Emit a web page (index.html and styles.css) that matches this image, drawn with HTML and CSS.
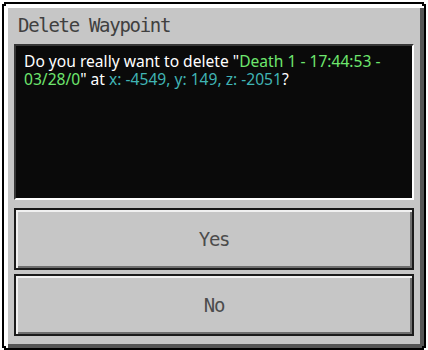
FILE: index.html
```html
<!DOCTYPE html>
<html>
<head>
<meta charset="utf-8">
<link rel="stylesheet" href="styles.css">
</head>
<body>
<div class="frame">
  <div class="title">Delete Waypoint</div>
  <div class="msgbox">
    <p class="msg">Do you really want to delete "<span class="green">Death 1 - 17:44:53 - 03/28/0</span>" at <span class="aqua">x: -4549, y: 149, z: -2051</span>?</p>
  </div>
  <div class="buttons">
    <div class="btn">Yes</div>
    <div class="btn">No</div>
  </div>
</div>
</body>
</html>
```
FILE: styles.css
```css
* { box-sizing: border-box; }
html, body { margin: 0; padding: 0; background: #ffffff; }
body { width: 428px; height: 350px; overflow: hidden; }

.frame {
  position: relative;
  margin: 2px 2px 0 2px;
  width: 424px;
  height: 348px;
  background: #c6c6c6;
  border: 2px solid #000;
  box-shadow: inset 4px 4px 0 #ffffff, inset -4px -4px 0 #555555;
  padding: 0 10px 12px 10px;
  display: flex;
  flex-direction: column;
  clip-path: polygon(2px 0, calc(100% - 2px) 0, calc(100% - 2px) 2px, 100% 2px,
    100% calc(100% - 2px), calc(100% - 2px) calc(100% - 2px), calc(100% - 2px) 100%,
    2px 100%, 2px calc(100% - 2px), 0 calc(100% - 2px), 0 2px, 2px 2px);
}
.frame::before {
  content: "";
  position: absolute;
  top: 0;
  left: 0;
  width: 2px;
  height: 2px;
  background: #000;
  box-shadow: 418px 0 #000, 0 342px #000, 418px 342px #000;
}

.title {
  height: 40px;
  padding: 11px 0 0 4px;
  font-family: "DejaVu Sans Mono", monospace;
  font-size: 19px;
  letter-spacing: -1.3px;
  line-height: 20px;
  color: #404040;
}

.msgbox {
  height: 156px;
  background: #0a0a0a;
  border-top: 2px solid #373737;
  border-left: 2px solid #373737;
  border-right: 2px solid #ffffff;
  border-bottom: 2px solid #ffffff;
  padding: 6px 8px;
}

.msg {
  margin: 0;
  font-family: "Noto Sans", "Open Sans", sans-serif;
  font-size: 15.6px;
  line-height: 18px;
  color: #ffffff;
}
.green { color: #6ee66e; }
.aqua { color: #40b4b4; }

.buttons {
  margin-top: 8px;
  display: flex;
  flex-direction: column;
  gap: 4px;
}

.btn {
  height: 62px;
  background: #c6c6c6;
  border: 2px solid #1a1a1a;
  box-shadow: inset 2px 2px 0 #f0f0f0, inset -2px -2px 0 #6e6e6e;
  display: flex;
  align-items: center;
  justify-content: center;
  font-family: "DejaVu Sans Mono", monospace;
  font-size: 19px;
  letter-spacing: -1.3px;
  color: #4c4c4c;
}
```
